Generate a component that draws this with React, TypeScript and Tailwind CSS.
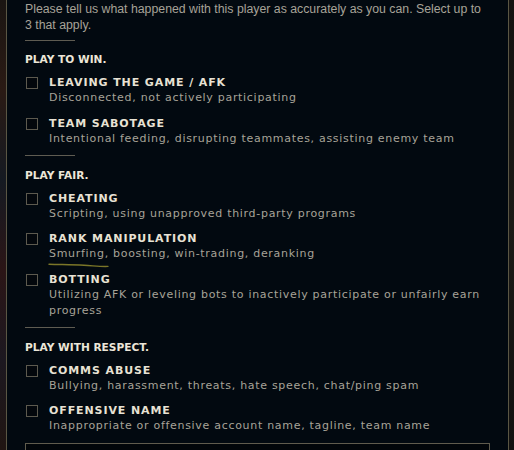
import React from "react";

type Item = { title: string; desc: string; mark?: boolean };
type Section = { heading: string; items: Item[] };

const sections: Section[] = [
  {
    heading: "PLAY TO WIN.",
    items: [
      { title: "LEAVING THE GAME / AFK", desc: "Disconnected, not actively participating" },
      { title: "TEAM SABOTAGE", desc: "Intentional feeding, disrupting teammates, assisting enemy team" },
    ],
  },
  {
    heading: "PLAY FAIR.",
    items: [
      { title: "CHEATING", desc: "Scripting, using unapproved third-party programs" },
      { title: "RANK MANIPULATION", desc: "Smurfing, boosting, win-trading, deranking", mark: true },
      { title: "BOTTING", desc: "Utilizing AFK or leveling bots to inactively participate or unfairly earn progress" },
    ],
  },
  {
    heading: "PLAY WITH RESPECT.",
    items: [
      { title: "COMMS ABUSE", desc: "Bullying, harassment, threats, hate speech, chat/ping spam" },
      { title: "OFFENSIVE NAME", desc: "Inappropriate or offensive account name, tagline, team name" },
    ],
  },
];

function Divider() {
  return <div className="w-[50px] h-px bg-[#5f5c52]" />;
}

function Row({ item }: { item: Item }) {
  return (
    <div className="flex items-start">
      <div className="w-[12px] h-[12px] mt-[2px] ml-px border border-[#5d5a4f] bg-[#03070c] shrink-0" />
      <div className="ml-[11px] relative">
        <div className="text-[11px] leading-[15px] font-bold tracking-[0.9px] text-[#e8e2d4] font-['DejaVu_Sans',sans-serif]">
          {item.title}
        </div>
        <div className="text-[11px] leading-[16px] tracking-[0.7px] text-[#a7a398] font-['DejaVu_Sans',sans-serif]">
          {item.desc}
        </div>
        {item.mark && (
          <svg className="absolute left-[-1px] top-[31px]" width="64" height="8" viewBox="0 0 64 8">
            <path d="M1 2.2 C 14 2.6, 24 2.4, 36 3.2 S 54 4.8, 60 4.4" stroke="#7b7628" strokeWidth="1.4" fill="none" strokeLinecap="round" />
          </svg>
        )}
      </div>
    </div>
  );
}

export default function App() {
  return (
    <div className="w-[514px] h-[450px] overflow-hidden flex bg-[#0d0b0a]">
      <div className="w-[6px] shrink-0 bg-[linear-gradient(180deg,#1a1512_0%,#2a1a14_20%,#151a22_40%,#2b1516_60%,#1c1820_80%,#201512_100%)]" />
      <div className="w-[503px] shrink-0 border-x border-[#5a5644] bg-[#020910] px-[18px] pt-px">
        <p className="text-[12.3px] leading-[16px] text-[#a7a398] font-['Liberation_Sans',sans-serif]">
          Please tell us what happened with this player as accurately as you can. Select up to 3 that apply.
        </p>
        {sections.map((s, i) => (
          <div key={i} className={i === 0 ? "mt-[7px]" : "mt-[8px]"}>
            <Divider />
            <div
              className={
                (i === 0 ? "mt-[11px]" : "mt-[12px]") +
                " text-[10.6px] leading-[15px] font-bold text-[#ece6d8] font-['DejaVu_Sans',sans-serif]"
              }
            >
              {s.heading}
            </div>
            <div className="mt-[8px] flex flex-col gap-[9.5px]">
              {s.items.map((it, j) => (
                <Row key={j} item={it} />
              ))}
            </div>
          </div>
        ))}
        <div className="mt-[9px] h-[40px] border border-[#5f5b4d] bg-[#010509]" />
      </div>
      <div className="w-[5px] shrink-0 bg-[linear-gradient(180deg,#141210_0%,#1c1a16_50%,#121110_100%)]" />
    </div>
  );
}
